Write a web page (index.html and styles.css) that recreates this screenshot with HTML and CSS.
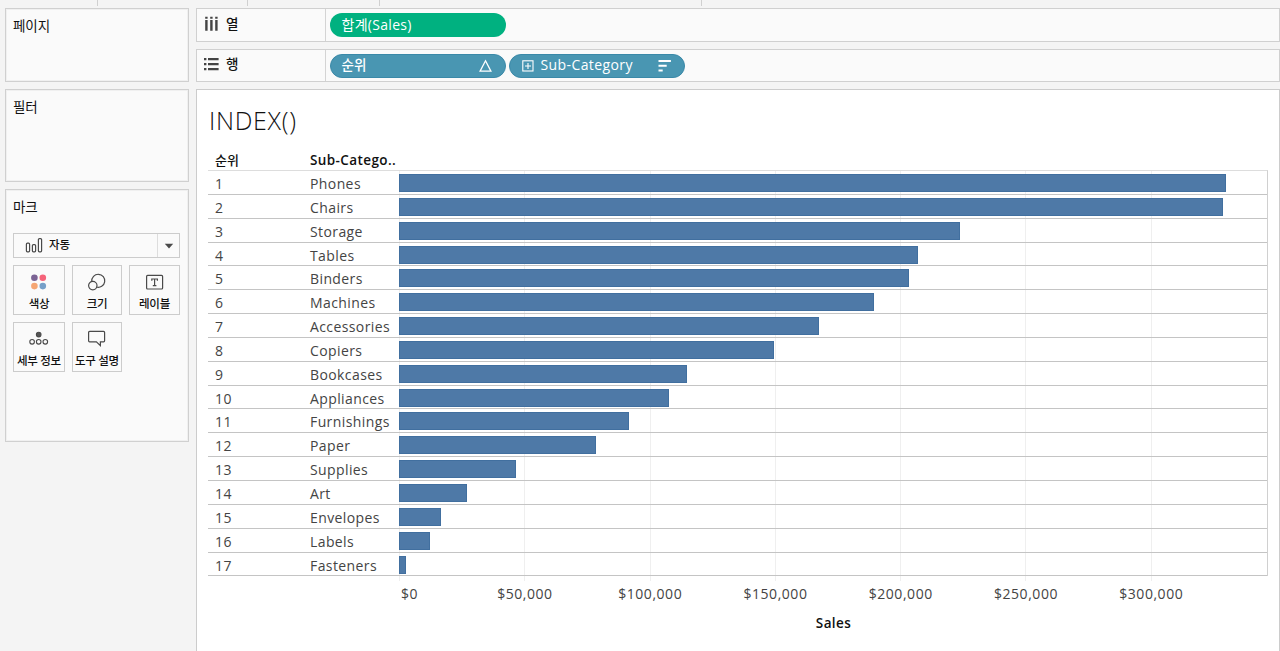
FILE: index.html
```html
<!DOCTYPE html>
<html lang="ko">
<head>
<meta charset="utf-8">
<title>INDEX()</title>
<link rel="stylesheet" href="styles.css">
</head>
<body>
<div class="ruler"><i class="w1"></i><i class="w2"></i><i class="w3"></i><i class="w4"></i></div>
<div class="workspace">
  <aside class="sidebar">
    <section class="card pages"><h2>페이지</h2></section>
    <section class="card filters"><h2>필터</h2></section>
    <section class="card marks">
      <h2>마크</h2>
      <div class="select">
        <svg width="18" height="16" viewBox="0 0 18 16" fill="none" stroke="#4a4a4a" stroke-width="1.2"><rect x="1.4" y="5.2" width="3.2" height="8.6" rx="1"/><rect x="7.4" y="6.6" width="3.2" height="7.2" rx="1"/><rect x="13.4" y=".6" width="3.2" height="13.2" rx="1"/></svg>
        <span>자동</span>
        <b><svg width="10" height="6" viewBox="0 0 10 6"><path d="M.8 .8H9.2L5 5.4Z" fill="#4a4a4a"/></svg></b>
      </div>
      <div class="mark-buttons">
        <div class="mark"><svg width="20" height="20" viewBox="0 0 20 20"><circle cx="5.4" cy="5.8" r="3.3" fill="#7b6394"/><circle cx="13.8" cy="5.8" r="3.3" fill="#f5637a"/><circle cx="5.4" cy="14.1" r="3.3" fill="#f5a673"/><circle cx="13.8" cy="14.1" r="3.3" fill="#76a0c9"/></svg><span>색상</span></div>
        <div class="mark"><svg width="20" height="20" viewBox="0 0 20 20" fill="none" stroke="#4a4a4a" stroke-width="1.2"><path d="M4.8 9.4A6.5 6.5 0 1 1 9.4 15"/><circle cx="5.8" cy="13.6" r="4.2"/></svg><span>크기</span></div>
        <div class="mark"><svg width="20" height="20" viewBox="0 0 20 20" fill="none" stroke="#4a4a4a" stroke-width="1.2"><rect x="1.6" y="3.4" width="16" height="13.6" rx="1"/><path d="M6.8 8.8V7H12.4V8.8M9.6 7V13.6M7.8 13.6H11.4"/></svg><span>레이블</span></div>
        <div class="mark"><svg width="20" height="20" viewBox="0 0 20 20" fill="none" stroke="#4a4a4a" stroke-width="1.1"><circle cx="9.7" cy="5.6" r="2.3" fill="#555"/><circle cx="3.1" cy="12.8" r="2.3"/><circle cx="9.7" cy="12.8" r="2.3"/><circle cx="16.3" cy="12.8" r="2.3"/></svg><span>세부 정보</span></div>
        <div class="mark"><svg width="20" height="20" viewBox="0 0 20 20" fill="none" stroke="#4a4a4a" stroke-width="1.2"><path d="M2.6 2.4H16.6a1 1 0 0 1 1 1V11.8a1 1 0 0 1-1 1H13.4V16.6L9.4 12.8H2.6a1 1 0 0 1-1-1V3.4a1 1 0 0 1 1-1Z"/></svg><span>도구 설명</span></div>
      </div>
    </section>
  </aside>
  <main class="main">
    <div class="shelf">
      <div class="shelf-label"><svg width="16" height="16" viewBox="0 0 16 16" fill="#444"><path d="M2.2 .8h2.4v2h-2.4zM2.2 4h2.4V14.8h-2.4zM7.2 .8h2.4v2h-2.4zM7.2 4h2.4V14.8h-2.4zM12.2 .8h2.4v2h-2.4zM12.2 4h2.4V14.8h-2.4z"/></svg><span>열</span></div>
      <div class="pill green"><span>합계(Sales)</span></div>
    </div>
    <div class="shelf rows">
      <div class="shelf-label"><svg width="16" height="16" viewBox="0 0 16 16" fill="#444"><path d="M1 1h2.4v2.3H1zM5 1h10.6v2.3H5zM1 6h2.4v2.3H1zM5 6h10.6v2.3H5zM1 11h2.4v2.3H1zM5 11h10.6v2.3H5z"/></svg><span>행</span></div>
      <div class="pill blue"><span>순위</span><svg class="end" width="14" height="14" viewBox="0 0 14 14" fill="none" stroke="#fff" stroke-width="1.3"><path d="M6.5 1.8L11.9 12.2H1.1Z"/></svg></div>
      <div class="pill blue sub"><svg width="12" height="12" viewBox="0 0 12 12" fill="none" stroke="#fff" stroke-width="1.1"><rect x=".8" y=".8" width="10.2" height="10.2"/><path d="M3 6H9M6 3V9"/></svg><span class="latin">Sub-Category</span><svg class="end" width="14" height="14" viewBox="0 0 14 14" fill="#fff"><path d="M.5 1h12.4v2H.5zM.5 5.8h8.2v2H.5zM.5 10.6h4.2v2H.5z"/></svg></div>
    </div>
    <section class="view">
      <h1>INDEX()</h1>
      <div class="head"><span>순위</span><span class="latin">Sub-Catego..</span></div>
      <div class="table">
        <div class="row"><span>1</span><span>Phones</span><div class="plot"><i style="width:827px"></i></div></div>
        <div class="row"><span>2</span><span>Chairs</span><div class="plot"><i style="width:823.5px"></i></div></div>
        <div class="row"><span>3</span><span>Storage</span><div class="plot"><i style="width:561px"></i></div></div>
        <div class="row"><span>4</span><span>Tables</span><div class="plot"><i style="width:519px"></i></div></div>
        <div class="row"><span>5</span><span>Binders</span><div class="plot"><i style="width:510px"></i></div></div>
        <div class="row"><span>6</span><span>Machines</span><div class="plot"><i style="width:475px"></i></div></div>
        <div class="row"><span>7</span><span>Accessories</span><div class="plot"><i style="width:420px"></i></div></div>
        <div class="row"><span>8</span><span>Copiers</span><div class="plot"><i style="width:375px"></i></div></div>
        <div class="row"><span>9</span><span>Bookcases</span><div class="plot"><i style="width:288px"></i></div></div>
        <div class="row"><span>10</span><span>Appliances</span><div class="plot"><i style="width:270px"></i></div></div>
        <div class="row"><span>11</span><span>Furnishings</span><div class="plot"><i style="width:230px"></i></div></div>
        <div class="row"><span>12</span><span>Paper</span><div class="plot"><i style="width:197px"></i></div></div>
        <div class="row"><span>13</span><span>Supplies</span><div class="plot"><i style="width:117px"></i></div></div>
        <div class="row"><span>14</span><span>Art</span><div class="plot"><i style="width:68px"></i></div></div>
        <div class="row"><span>15</span><span>Envelopes</span><div class="plot"><i style="width:42px"></i></div></div>
        <div class="row"><span>16</span><span>Labels</span><div class="plot"><i style="width:31px"></i></div></div>
        <div class="row"><span>17</span><span>Fasteners</span><div class="plot"><i style="width:7px"></i></div></div>
      </div>
      <div class="ticks"></div>
      <div class="axis"><span>$0</span><span>$50,000</span><span>$100,000</span><span>$150,000</span><span>$200,000</span><span>$250,000</span><span>$300,000</span></div>
      <div class="axis-title">Sales</div>
    </section>
  </main>
</div>
</body>
</html>
```
FILE: styles.css
```css
* { box-sizing: border-box; }
body {
  margin: 0;
  height: 651px;
  overflow: hidden;
  background: #f4f4f4;
  color: #111;
  font-family: "Open Sans", "Noto Sans CJK KR", sans-serif;
  font-size: 14px;
}
h1, h2 { margin: 0; font-weight: 400; }
svg { display: block; flex: none; }

.ruler { display: flex; height: 6px; }
.ruler i { border-right: 1px solid #d0d0d0; }
.w1 { width: 98px; }
.w2 { width: 150px; }
.w3 { width: 132px; }
.w4 { width: 322px; }

.workspace { display: flex; gap: 7px; padding: 2px 0 0 5px; height: 645px; }
.sidebar { width: 184px; display: flex; flex-direction: column; gap: 7px; }
.card { border: 1px solid #d0d0d0; background: #fafafa; box-shadow: inset 0 0 0 1px #f0f0f0; padding: 8px 7px 7px; }
.card h2 { font-size: 13.5px; line-height: 18px; font-weight: 400; letter-spacing: -0.1px; }
.pages { height: 74px; }
.filters { height: 93px; }
.marks { height: 253px; }

.select { display: flex; align-items: center; height: 25px; margin-top: 17px; padding-left: 11px; width: 167px; border: 1px solid #ccc; font-size: 11.5px; font-weight: 500; }
.select span { margin-left: 6px; line-height: 20px; padding-bottom: 2px; }
.select b { margin-left: auto; width: 22px; height: 23px; border-left: 1px solid #ddd; display: flex; align-items: center; justify-content: center; }

.mark-buttons { display: grid; grid-template-columns: 52px 50px 51px; gap: 7px; margin-top: 7px; }
.mark { height: 50px; border: 1px solid #ccc; display: flex; flex-direction: column; align-items: center; padding-top: 6px; font-size: 11.5px; font-weight: 500; white-space: nowrap; letter-spacing: -0.3px; }
.mark span { line-height: 16px; margin-top: 4px; }

.main { flex: 1; display: flex; flex-direction: column; min-width: 0; }
.shelf { display: flex; align-items: center; height: 34px; border: 1px solid #d0d0d0; background: #fafafa; margin-bottom: 7px; }
.shelf.rows { height: 33px; }
.shelf-label { width: 129px; height: 100%; border-right: 1px solid #d4d4d4; display: flex; align-items: center; padding: 0 0 2px 6px; gap: 7px; margin-right: 3.5px; font-size: 13.5px; font-weight: 500; }
.shelf-label span { line-height: 20px; padding-bottom: 1px; }
.pill { width: 176.5px; height: 24px; margin-right: 2.5px; border-radius: 12px; padding: 0 12px; display: flex; align-items: center; color: #fff; font-size: 14px; line-height: 20px; letter-spacing: 0.3px; }
.pill span { padding-bottom: 1px; font-family: "Open Sans", "Noto Sans CJK KR", sans-serif; }
.pill .latin { letter-spacing: 0.4px; }
.green { background: #00b180; }
.blue { background: #4996b2; border: 1px solid #3a89a8; padding: 0 12px 0 11px; }
.rows .blue:not(.sub) span { font-size: 13.5px; letter-spacing: 0; font-weight: 500; }
.sub { padding-left: 12px; gap: 7px; }
.end { margin-left: auto; }

.view { flex: 1; min-height: 0; border: 1px solid #ccc; border-bottom: 0; background: #fff; padding: 11px 11px 0 11px; }
h1 { font-size: 25px; line-height: 38px; font-weight: 300; padding-left: 1px; letter-spacing: 0.7px; }
.head { display: flex; height: 31px; padding: 11px 0 0 7px; line-height: 20px; font-size: 13px; font-weight: 500; }
.head span:first-child { width: 95px; }
.head .latin { font-size: 13.5px; font-weight: 600; letter-spacing: 0.4px; }

.table { border-top: 1px solid #ddd; border-right: 1px solid #d0d0d0; }
.row { display: flex; height: 23.85px; border-bottom: 1px solid #c4c4c4; color: #444; letter-spacing: 0.4px; line-height: 25px; }
.row span:first-child { width: 95px; margin-left: 7px; }
.row span:nth-child(2) { width: 89px; }
.plot { flex: 1; padding-top: 3px; }
.plot, .ticks { background: repeating-linear-gradient(to right, #efefef 0 1px, transparent 1px 125.27px); }
.plot i { display: block; height: 18px; background: #4e79a7; box-shadow: inset 0 0 0 1px #416f9f; }
.ticks { margin-left: 191px; height: 5px; }
.axis { display: flex; margin-left: 191px; height: 27px; line-height: 26px; color: #444; letter-spacing: 0.55px; }
.axis span { flex: none; width: 125.27px; text-align: center; }
.axis span:first-child { width: 63.3px; padding-left: 2px; text-align: left; }
.axis-title { margin-left: 191px; text-align: center; font-size: 13.5px; font-weight: 600; line-height: 31px; letter-spacing: 0.4px; }
```
